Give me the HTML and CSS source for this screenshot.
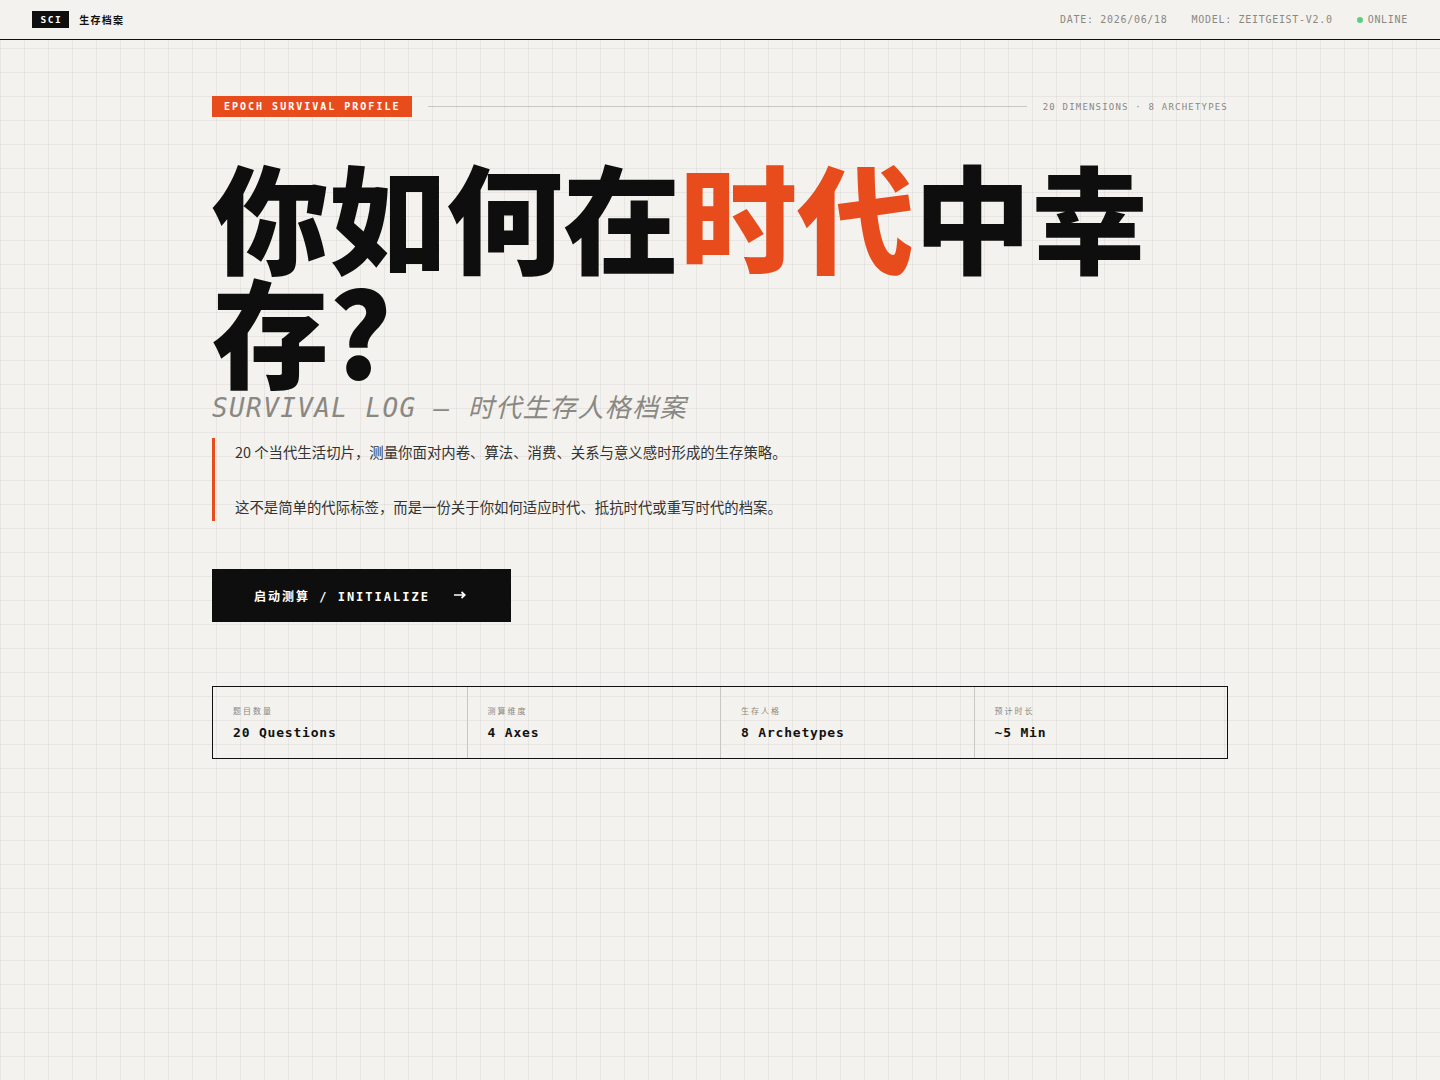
FILE: index.html
```html
<!DOCTYPE html>
<html lang="zh-CN">
<head>
<meta charset="utf-8">
<title>生存档案</title>
<link rel="stylesheet" href="styles.css">
</head>
<body>
<header class="topbar">
  <div class="brand">
    <span class="brand-badge">SCI</span>
    <span class="brand-name">生存档案</span>
  </div>
  <div class="meta">
    <span>DATE: 2026/06/18</span>
    <span>MODEL: ZEITGEIST-V2.0</span>
    <span class="status"><i class="dot"></i>ONLINE</span>
  </div>
</header>

<main class="hero">
  <div class="tag-row">
    <span class="tag">EPOCH SURVIVAL PROFILE</span>
    <span class="rule"></span>
    <span class="tag-meta">20 DIMENSIONS · 8 ARCHETYPES</span>
  </div>

  <h1 class="headline">你如何在<span class="accent">时代</span>中幸存?</h1>
  <p class="subtitle">SURVIVAL LOG — 时代生存人格档案</p>

  <p class="intro">20 个当代生活切片，测量你面对内卷、算法、消费、关系与意义感时形成的生存策略。<br><br>这不是简单的代际标签，而是一份关于你如何适应时代、抵抗时代或重写时代的档案。</p>

  <button class="cta" type="button">
    <span>启动测算 / INITIALIZE</span>
    <svg class="arrow" width="12" height="8" viewBox="0 0 12 8" aria-hidden="true"><path d="M0 4H10.5M7.5 1L10.8 4L7.5 7" fill="none" stroke="#fff" stroke-width="1.7"/></svg>
  </button>

  <div class="stats">
    <div class="stat"><div class="stat-label">题目数量</div><div class="stat-value">20 Questions</div></div>
    <div class="stat"><div class="stat-label">测算维度</div><div class="stat-value">4 Axes</div></div>
    <div class="stat"><div class="stat-label">生存人格</div><div class="stat-value">8 Archetypes</div></div>
    <div class="stat"><div class="stat-label">预计时长</div><div class="stat-value">~5 Min</div></div>
  </div>
</main>
</body>
</html>
```

FILE: styles.css
```css
* { box-sizing: border-box; }

html, body {
  margin: 0;
  padding: 0;
}

body {
  min-height: 1080px;
  background-color: #f3f2ee;
  background-image:
    linear-gradient(to right, rgba(0,0,0,0.05) 1px, transparent 1px),
    linear-gradient(to bottom, rgba(0,0,0,0.05) 1px, transparent 1px);
  background-size: 24px 24px;
  font-family: "DejaVu Sans Mono", "Noto Sans CJK SC", monospace;
  color: #111;
}

.topbar {
  height: 40px;
  border-bottom: 1px solid #111;
  background: #f3f2ee;
  display: flex;
  align-items: center;
  justify-content: space-between;
  padding: 0 32px;
}

.brand {
  display: flex;
  align-items: center;
  gap: 10px;
}

.brand-badge {
  background: #0e0e0e;
  color: #fff;
  font-size: 9.5px;
  font-weight: 700;
  letter-spacing: 1.5px;
  height: 17px;
  line-height: 17px;
  padding: 0 7px 0 8.5px;
}

.brand-name {
  font-family: "Noto Sans CJK SC", sans-serif;
  font-size: 10px;
  font-weight: 700;
  letter-spacing: 1.3px;
  color: #111;
}

.meta {
  display: flex;
  align-items: center;
  gap: 24px;
  font-size: 10px;
  letter-spacing: 0.7px;
  color: #8a8883;
}

.status {
  display: flex;
  align-items: center;
  gap: 5px;
}

.dot {
  width: 6px;
  height: 6px;
  border-radius: 50%;
  background: #5ccf7e;
  display: inline-block;
}

.hero {
  width: 1016px;
  margin: 0 auto;
  padding-top: 56px;
}

.tag-row {
  display: flex;
  align-items: center;
  gap: 16px;
  height: 21px;
}

.tag {
  background: #e84c1d;
  color: #fff;
  font-size: 10px;
  font-weight: 700;
  letter-spacing: 2px;
  height: 21px;
  line-height: 21px;
  padding: 0 12px;
  white-space: nowrap;
}

.rule {
  flex: 1;
  height: 1px;
  background: #c9c7c1;
}

.tag-meta {
  font-size: 9px;
  letter-spacing: 1.2px;
  color: #8a8883;
  white-space: nowrap;
}

.headline {
  margin: 40px 0 0;
  font-family: "Noto Sans CJK SC", sans-serif;
  font-weight: 900;
  font-size: 117px;
  line-height: 114px;
  letter-spacing: 0;
  color: #0e0e0e;
}

.accent { color: #e84c1d; }

.subtitle {
  margin: 8px 0 0;
  font-style: italic;
  font-size: 26px;
  line-height: 31px;
  letter-spacing: 1.4px;
  color: #8a8883;
}

.intro {
  margin: 14px 0 0;
  border-left: 3px solid #e84c1d;
  padding-left: 20px;
  font-family: "Noto Sans CJK SC", sans-serif;
  font-size: 14.4px;
  line-height: 27.5px;
  color: #333;
}

.cta {
  margin-top: 48px;
  display: flex;
  align-items: center;
  gap: 24px;
  height: 53px;
  padding: 0 45px 0 42px;
  background: #0e0e0e;
  color: #fff;
  border: 0;
  border-radius: 0;
  font-family: "DejaVu Sans Mono", "Noto Sans CJK SC", monospace;
  font-size: 12px;
  font-weight: 700;
  letter-spacing: 2px;
  cursor: pointer;
}

.arrow { display: block; }

.stats {
  margin-top: 64px;
  border: 1px solid #111;
  display: grid;
  grid-template-columns: repeat(4, 1fr);
}

.stat {
  padding: 18px 20px 16px;
  border-left: 1px solid #c9c7c1;
}

.stat:first-child { border-left: 0; }

.stat-label {
  font-family: "Noto Sans CJK SC", sans-serif;
  font-size: 8px;
  line-height: 12px;
  letter-spacing: 2px;
  color: #8a8883;
}

.stat-value {
  margin-top: 7px;
  font-size: 13px;
  line-height: 18px;
  font-weight: 700;
  letter-spacing: 0.8px;
  color: #111;
}
```
